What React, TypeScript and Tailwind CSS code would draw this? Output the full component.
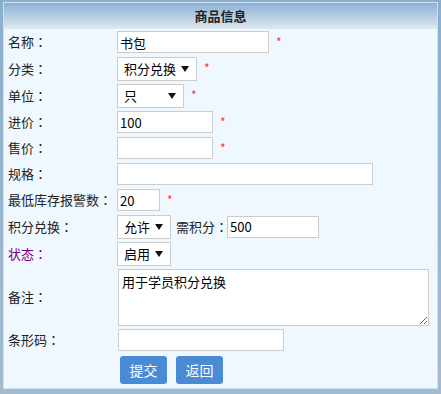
import React from 'react';

const inputCls =
  'h-[22px] border border-[#cccccc] bg-white px-[2px] text-[13px] text-black outline-none';

function Star() {
  return <span className="ml-[7px] -mt-[1px] text-[12px] leading-none text-[#ff3333]">*</span>;
}

function Select({ value, width }: { value: string; width: string }) {
  return (
    <div
      className={`flex h-[24px] items-center justify-between border border-[#cccccc] bg-white pl-[6px] pr-[7px] text-[13px] text-black ${width}`}
    >
      <span>{value}</span>
      <svg width="8" height="6" viewBox="0 0 8 6">
        <path d="M0 0 L8 0 L4 6 Z" fill="#111" />
      </svg>
    </div>
  );
}

function Colon() {
  return <span className="font-['Noto_Sans_CJK_TC',sans-serif]">：</span>;
}

function Row({
  label,
  height,
  labelClass = 'text-[#222]',
  children,
}: {
  label: string;
  height: string;
  labelClass?: string;
  children?: React.ReactNode;
}) {
  return (
    <div className={`flex items-center ${height}`}>
      <div className={`w-[113px] shrink-0 whitespace-nowrap pl-[4px] text-[13px] ${labelClass}`}>
        {label}
        <Colon />
      </div>
      <div className="flex items-center">{children}</div>
    </div>
  );
}

export default function App() {
  return (
    <div className="h-[394px] w-[441px] overflow-hidden bg-gradient-to-b from-[#8aaecd] to-[#a3bbcf] pl-[3px] pt-[2px] font-['Noto_Sans_CJK_SC',sans-serif]">
      <div className="h-[387px] w-[435px] border border-[#cfe0ee] bg-[#f0f8ff]">
        <div className="flex h-[26px] items-center justify-center bg-gradient-to-b from-[#8bb0d5] to-[#e0e8ef] text-[13px] font-bold text-[#222]">
          商品信息
        </div>

        <Row label="名称" height="h-[26px]">
          <input className={`${inputCls} w-[152px]`} defaultValue="书包" readOnly />
          <Star />
        </Row>
        <Row label="分类" height="h-[27px]">
          <Select value="积分兑换" width="w-[80px]" />
          <Star />
        </Row>
        <Row label="单位" height="h-[27px]">
          <Select value="只" width="w-[67px]" />
          <Star />
        </Row>
        <Row label="进价" height="h-[26px]">
          <input className={`${inputCls} w-[96px]`} defaultValue="100" readOnly />
          <Star />
        </Row>
        <Row label="售价" height="h-[26px]">
          <input className={`${inputCls} w-[96px]`} defaultValue="" readOnly />
          <Star />
        </Row>
        <Row label="规格" height="h-[26px]">
          <input className={`${inputCls} w-[256px]`} defaultValue="" readOnly />
        </Row>
        <Row label="最低库存报警数" height="h-[26px]">
          <input className={`${inputCls} w-[43px]`} defaultValue="20" readOnly />
          <Star />
        </Row>
        <Row label="积分兑换" height="h-[27px]">
          <Select value="允许" width="w-[54px]" />
          <span className="ml-[5px] whitespace-nowrap text-[13px] text-[#222]">
            需积分
            <Colon />
          </span>
          <input className={`${inputCls} -ml-[1px] w-[92px]`} defaultValue="500" readOnly />
        </Row>
        <Row label="状态" height="h-[27px]" labelClass="text-[#800080]">
          <Select value="启用" width="w-[54px]" />
        </Row>
        <Row label="备注" height="h-[60px]">
          <textarea
            className="ml-[1px] h-[57px] w-[311px] border border-[#cccccc] bg-white px-[3px] py-[2px] text-[13px] text-black outline-none"
            defaultValue="用于学员积分兑换"
            readOnly
          />
        </Row>
        <Row label="条形码" height="h-[25px]">
          <input className={`${inputCls} ml-[1px] w-[166px]`} defaultValue="" readOnly />
        </Row>
        <div className="flex h-[36px] items-center gap-[9px] pl-[116px]">
          <button className="h-[28px] w-[47px] rounded-[3px] bg-[#4a8bd6] text-[14px] text-white">提交</button>
          <button className="h-[28px] w-[47px] rounded-[3px] bg-[#4a8bd6] text-[14px] text-white">返回</button>
        </div>
      </div>
    </div>
  );
}
